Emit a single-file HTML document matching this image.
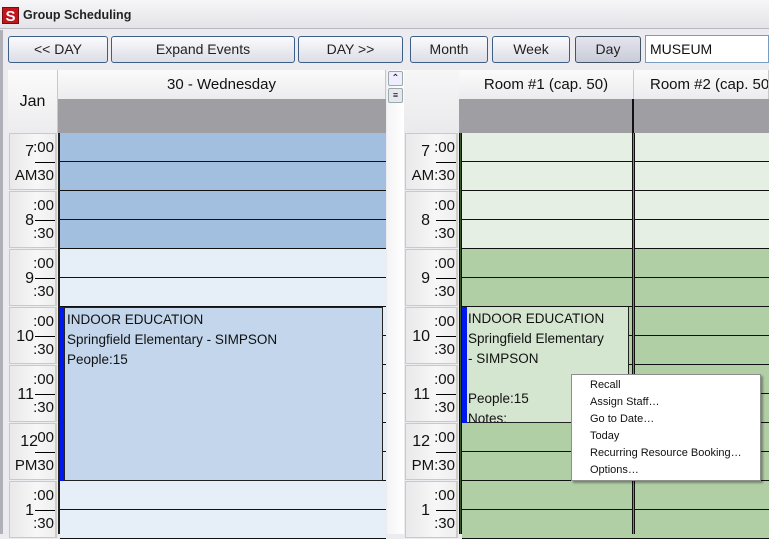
<!DOCTYPE html>
<html><head><style>
*{margin:0;padding:0;box-sizing:border-box}
body{width:769px;height:534px;overflow:hidden;background:#ecebf0;font-family:"Liberation Sans","DejaVu Sans",sans-serif;position:relative;color:#111}
.a{position:absolute}
.title{left:0;top:0;width:769px;height:29px;background:linear-gradient(#f6f6f8,#e4e3e8);border-bottom:1px solid #b8b8c0}
.btn{position:absolute;top:36px;height:27px;border:1px solid #3d5f86;border-radius:3px;background:linear-gradient(#fbfbfd,#dcdde6);font-size:14px;text-align:center;line-height:25px;color:#222}
.hdr{background:linear-gradient(#fbfbfb,#ececee);border-right:1px solid #c8c8c8;font-size:15px;text-align:center;line-height:30px}
.gray{background:#9f9ea3}
.tc{position:absolute;width:48px;height:57px;background:linear-gradient(90deg,#e9e9ea,#f7f7f7 60%,#eeeeee);border:1px solid #c9c9c9;border-right:2px solid #cfccc6}
.tc span{display:block}
.tc .h{position:absolute;left:0;top:19px;font-size:16px;line-height:20px;width:24px;text-align:right}
.tc .h.u{top:8px}
.tc .t{position:absolute;right:1px;top:5px;font-size:15px;line-height:18px}
.tc .b{position:absolute;right:1px;top:33px;font-size:15px;line-height:18px}
.tc .l{position:absolute;right:0;top:28px;width:20px;height:1px;background:#000}
.lines{background-image:repeating-linear-gradient(to bottom,transparent 0 28px,#111 28px 29px)}
.menu{left:571px;top:374px;width:190px;height:107px;background:#fff;border:1px solid #8e8e8e;box-shadow:2px 2px 2px rgba(0,0,0,.35);font-size:11px}
.menu div{position:absolute;left:18px}
</style></head><body>
<div class="a title">
 <div class="a" style="left:2px;top:7px;width:17px;height:17px;background:#c2141b;color:#fff;font-weight:bold;font-size:15px;text-align:center;line-height:17px;border:1px solid #7a0a0e">S</div>
 <div class="a" style="left:23px;top:8px;font-size:12.5px;font-weight:bold;color:#222">Group Scheduling</div>
</div>
<div class="a" style="left:0;top:30px;width:3px;height:504px;background:#b0b0b8"></div>
<div class="btn" style="left:8px;width:100px">&lt;&lt; DAY</div>
<div class="btn" style="left:111px;width:184px">Expand Events</div>
<div class="btn" style="left:298px;width:105px">DAY &gt;&gt;</div>
<div class="btn" style="left:410px;width:78px">Month</div>
<div class="btn" style="left:492px;width:78px">Week</div>
<div class="btn" style="left:575px;width:66px;background:linear-gradient(#e4e5ee,#c9cbd8);border-color:#456">Day</div>
<div class="a" style="left:645px;top:35px;width:124px;height:28px;background:#fff;border:1px solid #7a9cc0;font-size:14px;line-height:26px;padding-left:4px">MUSEUM</div>

<div class="a hdr" style="left:8px;top:70px;width:50px;height:63px;line-height:63px;font-size:16px">Jan</div>
<div class="a hdr" style="left:58px;top:70px;width:328px;height:29px">30 - Wednesday</div>
<div class="a gray" style="left:58px;top:99px;width:328px;height:34px"></div>
<div class="a" style="left:387px;top:70px;width:17px;height:464px;background:linear-gradient(90deg,#f4f4f6,#fff)"></div>
<div class="a" style="left:388px;top:71px;width:15px;height:15px;border:1px solid #9aa;border-radius:2px;background:#eef;font-size:10px;text-align:center;line-height:13px">&#8963;</div>
<div class="a" style="left:388px;top:88px;width:15px;height:15px;border:1px solid #9aa;border-radius:2px;background:#e6e7ef;font-size:9px;text-align:center;line-height:13px">&#8801;</div>

<div class="a" style="left:58px;top:133px;width:2px;height:401px;background:#222"></div>
<div class="a lines" style="left:60px;top:133px;width:326px;height:116px;background-color:#a3bfe0"></div>
<div class="a lines" style="left:60px;top:249px;width:326px;height:290px;background-color:#e6eef8"></div>
<div class="a" style="left:60px;top:307px;width:4px;height:174px;background:#0018f0"></div>
<div class="a" style="left:64px;top:307px;width:319px;height:174px;background:#c3d6ec;border:1px solid #222;font-size:13.5px;line-height:20px;padding:2px 0 0 2px">INDOOR EDUCATION<br>Springfield Elementary - SIMPSON<br>People:15</div>

<div class="tc" style="left:9px;top:133px"><span class="h u">7</span><span class="t">:00</span><span class="l"></span><span class="b">AM30</span></div>
<div class="tc" style="left:9px;top:191px"><span class="h">8</span><span class="t">:00</span><span class="l"></span><span class="b">:30</span></div>
<div class="tc" style="left:9px;top:249px"><span class="h">9</span><span class="t">:00</span><span class="l"></span><span class="b">:30</span></div>
<div class="tc" style="left:9px;top:307px"><span class="h">10</span><span class="t">:00</span><span class="l"></span><span class="b">:30</span></div>
<div class="tc" style="left:9px;top:365px"><span class="h">11</span><span class="t">:00</span><span class="l"></span><span class="b">:30</span></div>
<div class="tc" style="left:9px;top:423px"><span class="h u" style="width:28px">12</span><span class="t">00</span><span class="l"></span><span class="b">PM30</span></div>
<div class="tc" style="left:9px;top:481px"><span class="h">1</span><span class="t">:00</span><span class="l"></span><span class="b">:30</span></div>

<div class="a" style="left:404px;top:70px;width:55px;height:63px;background:linear-gradient(#f6f6f7,#eaeaec)"></div>
<div class="a hdr" style="left:459px;top:70px;width:175px;height:29px">Room #1 (cap. 50)</div>
<div class="a hdr" style="left:634px;top:70px;width:135px;height:29px;text-align:left;padding-left:16px;white-space:nowrap;overflow:hidden">Room #2 (cap. 50)</div>
<div class="a gray" style="left:459px;top:99px;width:310px;height:34px"></div>
<div class="a" style="left:632px;top:99px;width:2px;height:34px;background:#111"></div>

<div class="a" style="left:459px;top:133px;width:3px;height:401px;background:#3a5a2a;border-left:1px solid #111;border-right:1px solid #111"></div>
<div class="a lines" style="left:462px;top:133px;width:307px;height:116px;background-color:#e6efe3"></div>
<div class="a lines" style="left:462px;top:249px;width:307px;height:290px;background-color:#b0cfa4"></div>
<div class="a" style="left:632px;top:133px;width:3px;height:401px;background:#6a9a4a;border-left:1px solid #111;border-right:1px solid #111"></div>
<div class="a" style="left:462px;top:307px;width:5px;height:116px;background:#0018f0"></div>
<div class="a" style="left:467px;top:307px;width:162px;height:116px;background:#d5e6d0;border-right:1px solid #222;border-bottom:1px solid #222;font-size:13.5px;line-height:20px;padding:2px 0 0 1px;overflow:hidden">INDOOR EDUCATION<br>Springfield Elementary<br>- SIMPSON<br><br>People:15<br>Notes:</div>

<div class="tc" style="left:405px;top:133px;width:53px"><span class="h u">7</span><span class="t">:00</span><span class="l"></span><span class="b">AM:30</span></div>
<div class="tc" style="left:405px;top:191px;width:53px"><span class="h">8</span><span class="t">:00</span><span class="l"></span><span class="b">:30</span></div>
<div class="tc" style="left:405px;top:249px;width:53px"><span class="h">9</span><span class="t">:00</span><span class="l"></span><span class="b">:30</span></div>
<div class="tc" style="left:405px;top:307px;width:53px"><span class="h">10</span><span class="t">:00</span><span class="l"></span><span class="b">:30</span></div>
<div class="tc" style="left:405px;top:365px;width:53px"><span class="h">11</span><span class="t">:00</span><span class="l"></span><span class="b">:30</span></div>
<div class="tc" style="left:405px;top:423px;width:53px"><span class="h u">12</span><span class="t">:00</span><span class="l"></span><span class="b">PM:30</span></div>
<div class="tc" style="left:405px;top:481px;width:53px"><span class="h">1</span><span class="t">:00</span><span class="l"></span><span class="b">:30</span></div>

<div class="a menu">
 <div style="top:4px">Recall</div>
 <div style="top:21px">Assign Staff…</div>
 <div style="top:38px">Go to Date…</div>
 <div style="top:55px">Today</div>
 <div style="top:72px">Recurring Resource Booking…</div>
 <div style="top:89px">Options…</div>
</div>
</body></html>
